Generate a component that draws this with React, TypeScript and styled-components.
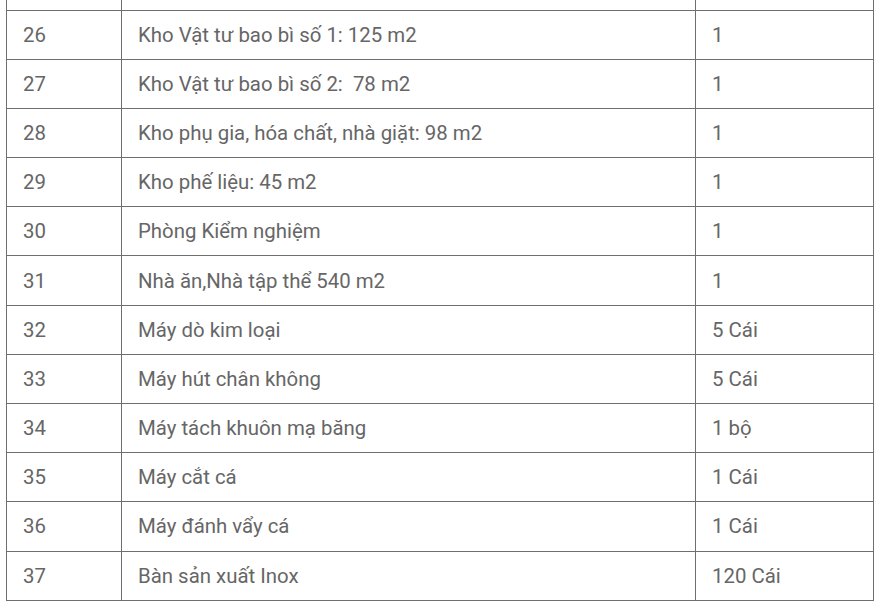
import React from "react";
import styled, { createGlobalStyle } from "styled-components";

const Global = createGlobalStyle`
  html, body { margin: 0; padding: 0; background: #fff; }
  body { font-family: Roboto, "Noto Sans", "Liberation Sans", sans-serif; }
`;

const Page = styled.div`
  padding: 0 6px;
  height: 605px;
  overflow: hidden;
`;

const Table = styled.table`
  width: 867px;
  border-collapse: collapse;
  table-layout: fixed;
  color: #666;
  font-size: 20.4px;
`;

const Row = styled.tr<{ $clipped?: boolean }>`
  height: ${(p) => (p.$clipped ? "10px" : "49.2px")};
`;

const Cell = styled.td<{ $clipped?: boolean }>`
  border: 1px solid #6f6f6f;
  ${(p) => (p.$clipped ? "border-top: none;" : "")}
  padding: 0 16px;
  line-height: 28px;
  vertical-align: middle;
  white-space: pre;
`;

const rows: [string, string, string][] = [
  ["26", "Kho Vật tư bao bì số 1: 125 m2", "1"],
  ["27", "Kho Vật tư bao bì số 2:  78 m2", "1"],
  ["28", "Kho phụ gia, hóa chất, nhà giặt: 98 m2", "1"],
  ["29", "Kho phế liệu: 45 m2", "1"],
  ["30", "Phòng Kiểm nghiệm", "1"],
  ["31", "Nhà ăn,Nhà tập thể 540 m2", "1"],
  ["32", "Máy dò kim loại", "5 Cái"],
  ["33", "Máy hút chân không", "5 Cái"],
  ["34", "Máy tách khuôn mạ băng", "1 bộ"],
  ["35", "Máy cắt cá", "1 Cái"],
  ["36", "Máy đánh vẩy cá", "1 Cái"],
  ["37", "Bàn sản xuất Inox", "120 Cái"],
];

export default function App() {
  return (
    <>
      <Global />
      <Page>
        <Table>
          <colgroup>
            <col style={{ width: 115 }} />
            <col style={{ width: 574 }} />
            <col style={{ width: 178 }} />
          </colgroup>
          <tbody>
            <Row $clipped>
              <Cell $clipped />
              <Cell $clipped />
              <Cell $clipped />
            </Row>
            {rows.map(([n, name, qty]) => (
              <Row key={n}>
                <Cell>{n}</Cell>
                <Cell>{name}</Cell>
                <Cell>{qty}</Cell>
              </Row>
            ))}
          </tbody>
        </Table>
      </Page>
    </>
  );
}
